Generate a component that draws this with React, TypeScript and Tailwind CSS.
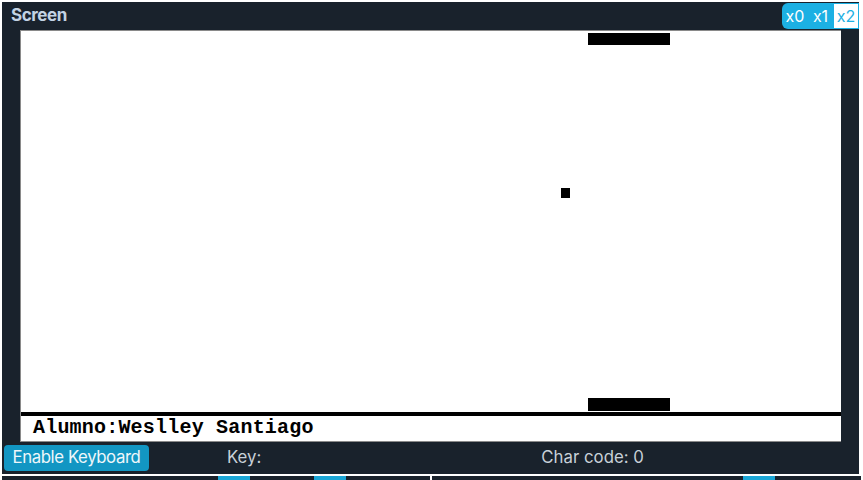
export default function App() {
  return (
    <div className="w-[863px] h-[480px] bg-white overflow-hidden flex flex-col font-['Inter',sans-serif]">
      {/* SCREEN PANEL */}
      <div className="mt-[2px] ml-[2px] w-[857px] bg-[#19222c] flex flex-col">
        {/* HEADER */}
        <div className="h-[28px] flex items-center justify-between pl-[9px]">
          <span className="text-[17px] font-bold text-[#c3d3e3] tracking-tight">Screen</span>
          <div className="flex h-[26px] self-start mt-[1px] rounded-l-md overflow-hidden text-[16px]">
            <button className="w-[26px] bg-[#1cb0e3] text-white">x0</button>
            <button className="w-[25px] bg-[#1cb0e3] text-white">x1</button>
            <button className="w-[26px] bg-white text-[#1cb0e3] border border-[#1cb0e3]">x2</button>
          </div>
        </div>

        {/* CANVAS */}
        <div className="mx-[18px] h-[412px] bg-white border-t border-l border-b border-[#8a8a8a] flex flex-col">
          <div className="relative h-[381px]">
            <div className="absolute left-[567px] top-[2px] w-[82px] h-[12px] bg-black" />
            <div className="absolute left-[540px] top-[157px] w-[9px] h-[10px] bg-black" />
            <div className="absolute left-[567px] top-[367px] w-[82px] h-[13px] bg-black" />
          </div>
          <div className="h-[4px] bg-black" />
          <div className="flex-1 pl-[12px] pt-[1px] font-['Liberation_Mono',monospace] font-bold text-[20px] leading-[22px] text-black tracking-[0.2px]">
            Alumno:Weslley Santiago
          </div>
        </div>

        {/* FOOTER BAR */}
        <div className="h-[32px] flex items-center text-[16.8px] text-[#c8d0d8]">
          <button className="ml-[2px] h-[26px] w-[145px] rounded-[4px] bg-[#1296c3] text-[#eef6fa] tracking-tight">
            Enable Keyboard
          </button>
          <span className="ml-[78px]">Key:</span>
          <span className="ml-[280px]">Char code: 0</span>
        </div>
      </div>

      {/* NEXT PANEL (peeking) */}
      <div className="mt-[2px] ml-[2px] w-[859px] flex-1 flex">
        <div className="w-[428px] bg-[#19222c] flex">
          <div className="ml-[216px] w-[32px] bg-[#1aa6d6]" />
          <div className="ml-[64px] w-[32px] bg-[#1aa6d6]" />
        </div>
        <div className="w-[2px]" />
        <div className="flex-1 bg-[#19222c] flex">
          <div className="ml-[311px] w-[32px] bg-[#1aa6d6]" />
        </div>
      </div>
    </div>
  );
}
